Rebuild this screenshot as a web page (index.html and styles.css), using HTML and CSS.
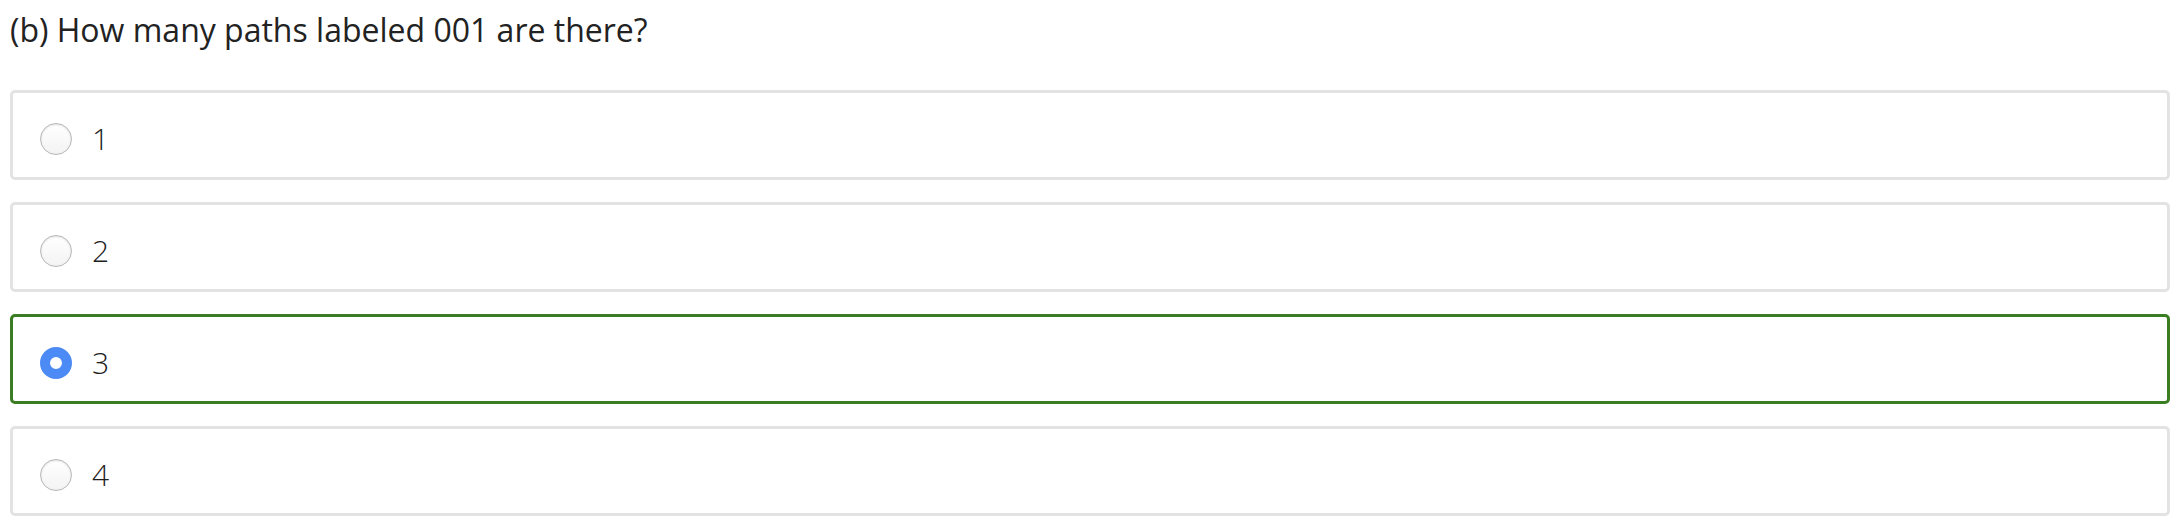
FILE: index.html
```html
<!DOCTYPE html>
<html>
<head>
<meta charset="utf-8">
<link rel="stylesheet" href="styles.css">
</head>
<body>
<div class="question">
  <h2 class="prompt">(b) How many paths labeled 001 are there?</h2>
  <div class="options">
    <label class="option"><span class="radio"></span><span class="label">1</span></label>
    <label class="option"><span class="radio"></span><span class="label">2</span></label>
    <label class="option selected"><span class="radio checked"></span><span class="label">3</span></label>
    <label class="option"><span class="radio"></span><span class="label">4</span></label>
  </div>
</div>
</body>
</html>
```
FILE: styles.css
```css
html, body {
  margin: 0;
  padding: 0;
  background: #ffffff;
}
.question {
  padding: 0 12px 0 10px;
  font-family: "Open Sans", sans-serif;
}
.prompt {
  margin: 0;
  padding-top: 8px;
  height: 90px;
  box-sizing: border-box;
  font-size: 32px;
  font-weight: 400;
  line-height: 44px;
  color: #222222;
}
.options {
  display: flex;
  flex-direction: column;
  gap: 22px;
}
.option {
  display: flex;
  align-items: center;
  height: 90px;
  box-sizing: border-box;
  border: 3px solid #e3e3e3;
  border-radius: 5px;
  padding: 8px 0 0 27px;
  gap: 20px;
}
.option.selected {
  border-color: #3b7d23;
}
.radio {
  width: 32px;
  height: 32px;
  box-sizing: border-box;
  border-radius: 50%;
  border: 1.5px solid #b8b8b8;
  background: linear-gradient(#ffffff, #f3f3f3);
  box-shadow: inset 0 1px 2px rgba(0,0,0,0.12);
  flex: none;
}
.radio.checked {
  border: 10.5px solid #4c8bf5;
  background: #ffffff;
  box-shadow: none;
}
.label {
  font-size: 30px;
  font-weight: 300;
  color: #1e1e1e;
  line-height: 32px;
}
```
